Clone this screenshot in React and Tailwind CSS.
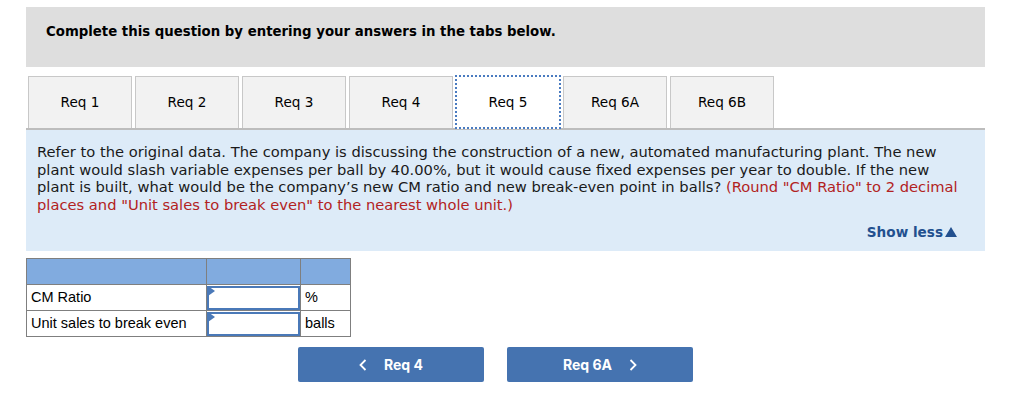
import React from 'react'

const tabs = ['Req 1', 'Req 2', 'Req 3', 'Req 4', 'Req 5', 'Req 6A', 'Req 6B']

function InputCell() {
  return (
    <td className="relative p-0 border border-[#7f7f7f]">
      <div className="h-[24px] border-2 border-[#4a79b8] bg-white" />
      <div className="absolute left-[1px] top-[1px] w-0 h-0 border-t-[5px] border-b-[5px] border-l-[7px] border-t-transparent border-b-transparent border-l-[#4a79b8]" />
    </td>
  )
}

export default function App() {
  return (
    <div className="w-[1024px] h-[408px] bg-white" style={{ fontFamily: '"DejaVu Sans", Verdana, sans-serif' }}>
      <div className="ml-[26px] w-[959px] pt-[7px]">
        {/* header */}
        <div className="h-[60px] bg-[#dedede] pl-[20px] pt-[16px]">
          <div className="text-[13.3px] leading-[17px] font-bold text-black">Complete this question by entering your answers in the tabs below.</div>
        </div>

        {/* tabs */}
        <div className="mt-[8px] pl-[2px] flex gap-[3px] border-b-2 border-[#bdbdbd]">
          {tabs.map((t) => {
            const active = t === 'Req 5'
            return (
              <div
                key={t}
                className={
                  active
                    ? 'w-[106px] h-[54px] -mb-[2px] -mx-[1px] bg-white border-2 border-dotted border-[#4a7bc0] flex items-center justify-center text-[13.6px] text-black'
                    : 'w-[104px] h-[52px] mt-[1px] bg-[#f2f2f2] border border-[#c8c8c8] border-b-0 flex items-center justify-center text-[13.6px] text-black'
                }
              >
                {t}
              </div>
            )
          })}
        </div>

        {/* question */}
        <div className="h-[121px] bg-[#ddebf8] pl-[11px] pr-[4px] pt-[13px] relative">
          <p className="text-[14.7px] leading-[17.5px] text-[#1a1a1a] whitespace-nowrap">
            Refer to the original data. The company is discussing the construction of a new, automated manufacturing plant. The new<br />
            plant would slash variable expenses per ball by 40.00%, but it would cause fixed expenses per year to double. If the new<br />
            plant is built, what would be the company’s new CM ratio and new break-even point in balls?{' '}
            <span className="text-[#b22222]">(Round "CM Ratio" to 2 decimal<br />places and "Unit sales to break even" to the nearest whole unit.)</span>
          </p>
          <div className="absolute right-[28px] bottom-[9px] flex items-center gap-[2px] text-[13.6px] font-bold text-[#22508f]">
            Show less
            <svg width="12" height="10" viewBox="0 0 12 10"><path d="M6 0 L12 10 L0 10 Z" fill="#22508f" /></svg>
          </div>
        </div>

        {/* answer table */}
        <table className="mt-[7px] border-collapse text-[14.5px] text-black" style={{ fontFamily: '"Liberation Sans", Arial, sans-serif' }}>
          <tbody>
            <tr className="h-[26px] bg-[#81abdf]">
              <td className="w-[180px] border border-[#7f7f7f]" />
              <td className="w-[94px] border border-[#7f7f7f]" />
              <td className="w-[50px] border border-[#7f7f7f]" />
            </tr>
            <tr className="h-[26px]">
              <td className="border border-[#7f7f7f] px-[4px]">CM Ratio</td>
              <InputCell />
              <td className="border border-[#7f7f7f] px-[4px]">%</td>
            </tr>
            <tr className="h-[26px]">
              <td className="border border-[#7f7f7f] px-[4px] whitespace-nowrap">Unit sales to break even</td>
              <InputCell />
              <td className="border border-[#7f7f7f] px-[4px]">balls</td>
            </tr>
          </tbody>
        </table>

        {/* nav buttons */}
        <div className="mt-[10px] ml-[272px] flex gap-[23px]" style={{ fontFamily: 'Inter, sans-serif' }}>
          <button className="w-[186px] h-[35px] rounded-[2px] bg-[#4573b0] text-white text-[14px] font-bold flex items-center justify-center gap-[17px]">
            <svg width="8" height="12" viewBox="0 0 8 12"><path d="M6.5 1 L1.5 6 L6.5 11" fill="none" stroke="white" strokeWidth="1.8" /></svg>
            <span>Req 4</span>
          </button>
          <button className="w-[186px] h-[35px] rounded-[2px] bg-[#4573b0] text-white text-[14px] font-bold flex items-center justify-center gap-[17px]">
            <span>Req 6A</span>
            <svg width="8" height="12" viewBox="0 0 8 12"><path d="M1.5 1 L6.5 6 L1.5 11" fill="none" stroke="white" strokeWidth="1.8" /></svg>
          </button>
        </div>
      </div>
    </div>
  )
}
